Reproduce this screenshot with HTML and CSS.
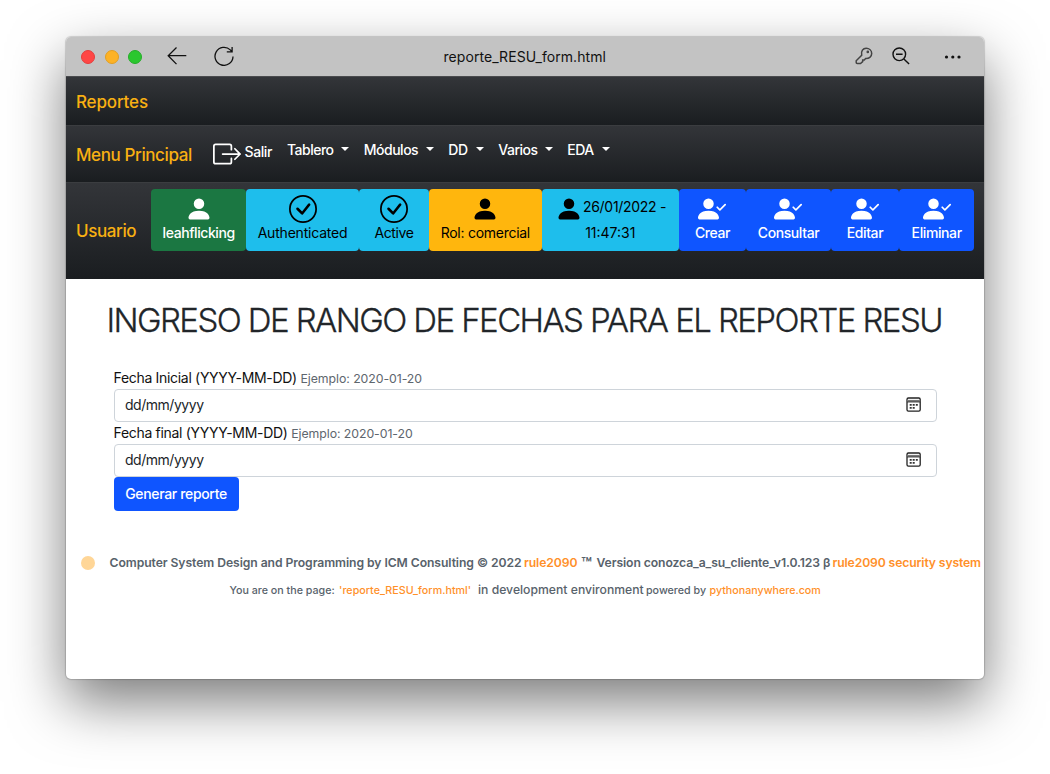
FILE: index.html
```html
<!DOCTYPE html>
<html lang="es">
<head>
<meta charset="utf-8">
<title>reporte_RESU_form.html</title>
<link rel="stylesheet" href="styles.css">
</head>
<body>
<svg class="defs" aria-hidden="true">
  <symbol id="person" viewBox="0 0 16 16"><path d="M3 14s-1 0-1-1 1-4 6-4 6 3 6 4-1 1-1 1H3zm5-6a3 3 0 1 0 0-6 3 3 0 0 0 0 6z"/></symbol>
  <symbol id="person-check" viewBox="0 0 16 16"><path d="M15.854 5.146a.5.5 0 0 1 0 .708l-3 3a.5.5 0 0 1-.708 0l-1.5-1.5a.5.5 0 0 1 .708-.708L12.5 7.793l2.646-2.647a.5.5 0 0 1 .708 0z"/><path d="M1 14s-1 0-1-1 1-4 6-4 6 3 6 4-1 1-1 1H1zm5-6a3 3 0 1 0 0-6 3 3 0 0 0 0 6z"/></symbol>
  <symbol id="check-circle" viewBox="0 0 16 16"><path d="M8 15A7 7 0 1 1 8 1a7 7 0 0 1 0 14zm0 1A8 8 0 1 0 8 0a8 8 0 0 0 0 16z"/><path d="M10.97 4.97a.235.235 0 0 0-.02.022L7.477 9.417 5.384 7.323a.75.75 0 0 0-1.06 1.06L6.97 11.03a.75.75 0 0 0 1.079-.02l3.992-4.99a.75.75 0 0 0-1.071-1.05z"/></symbol>
  <symbol id="exit" viewBox="0 0 16 16"><path d="M10 12.5a.5.5 0 0 1-.5.5h-8a.5.5 0 0 1-.5-.5v-9a.5.5 0 0 1 .5-.5h8a.5.5 0 0 1 .5.5v2a.5.5 0 0 0 1 0v-2A1.5 1.5 0 0 0 9.5 2h-8A1.5 1.5 0 0 0 0 3.5v9A1.5 1.5 0 0 0 1.5 14h8a1.5 1.5 0 0 0 1.5-1.5v-2a.5.5 0 0 0-1 0v2z"/><path d="M15.854 8.354a.5.5 0 0 0 0-.708l-3-3a.5.5 0 0 0-.708.708L14.293 7.5H5.5a.5.5 0 0 0 0 1h8.793l-2.147 2.146a.5.5 0 0 0 .708.708l3-3z"/></symbol>
  <symbol id="calendar" viewBox="0 0 16 16"><rect x="1" y="1" width="13.2" height="13.2" rx="1.4" fill="none" stroke="#222" stroke-width="1.3"/><path d="M1 2.900h13.200v2H1z" fill="#777"/><path d="M1 5h13.200" stroke="#222" stroke-width=".8"/><path d="M3.700 7.100h2v1.700h-2zM6.700 7.100h2v1.700h-2zM9.800 7.100h2v1.700h-2zM3.700 10h2v1.700h-2zM6.700 10h2v1.700h-2z" fill="#333"/></symbol>
</svg>

<div class="window">
  <header class="titlebar">
    <div class="lights"><i class="red"></i><i class="amber"></i><i class="green"></i></div>
    <svg class="back" viewBox="0 0 20 20"><path d="M19.300 9.700H1.200M9.500 1.500 1.200 9.700l8.300 8.400"/></svg>
    <svg class="reload" viewBox="0 0 20 20"><path d="M19 10.500A9 9 0 1 1 16.300 3.900L18 5.700M18.100.9v5h-5.300"/></svg>
    <span class="address">reporte_RESU_form.html</span>
    <svg class="key" viewBox="0 0 18 18"><path d="M6.700 8.200C5.800 4.200 8 1.200 11.200 1.200c3 0 5.500 2.200 5.500 5.300 0 3.400-2.800 5.200-6.100 5L9.300 13H7.700v1.600L5.500 16.600H2.200c-.7 0-1-.4-1-1V13.700z"/><circle cx="12.800" cy="4.900" r=".6"/></svg>
    <svg class="zoom" viewBox="0 0 18 18"><circle cx="7.300" cy="7.300" r="6.300"/><path d="M4 7.300h6.600M11.900 11.900l5.200 5.200"/></svg>
    <svg class="more" viewBox="0 0 18 6"><circle cx="2.500" cy="3" r="1.600"/><circle cx="8.800" cy="3" r="1.600"/><circle cx="15" cy="3" r="1.600"/></svg>
  </header>

  <nav class="bar bar-title"><a class="brand brand-reports">Reportes</a></nav>

  <nav class="bar bar-menu">
    <a class="brand brand-menu">Menu Principal</a>
    <a class="exit"><svg><use href="#exit"/></svg><span>Salir</span></a>
    <ul class="menu">
      <li class="m-tablero">Tablero</li>
      <li class="m-modulos">Módulos</li>
      <li class="m-dd">DD</li>
      <li class="m-varios">Varios</li>
      <li class="m-eda">EDA</li>
    </ul>
  </nav>

  <nav class="bar bar-user">
    <a class="brand brand-user">Usuario</a>
    <div class="tiles">
      <a class="tile user"><svg><use href="#person"/></svg><span>leahflicking</span></a>
      <a class="tile info auth"><svg><use href="#check-circle"/></svg><span>Authenticated</span></a>
      <a class="tile info active"><svg><use href="#check-circle"/></svg><span>Active</span></a>
      <a class="tile role"><svg><use href="#person"/></svg><span>Rol: comercial</span></a>
      <a class="tile info date"><b><svg><use href="#person"/></svg><span>26/01/2022 -</span></b><span class="time">11:47:31</span></a>
      <a class="tile act create"><svg><use href="#person-check"/></svg><span>Crear</span></a>
      <a class="tile act query"><svg><use href="#person-check"/></svg><span>Consultar</span></a>
      <a class="tile act edit"><svg><use href="#person-check"/></svg><span>Editar</span></a>
      <a class="tile act remove"><svg><use href="#person-check"/></svg><span>Eliminar</span></a>
    </div>
  </nav>

  <main>
    <h1>INGRESO DE RANGO DE FECHAS PARA EL REPORTE RESU</h1>
    <form>
      <label>Fecha Inicial (YYYY-MM-DD) <small>Ejemplo: 2020-01-20</small></label>
      <div class="field"><span>dd/mm/yyyy</span><svg><use href="#calendar"/></svg></div>
      <label>Fecha final (YYYY-MM-DD) <small>Ejemplo: 2020-01-20</small></label>
      <div class="field"><span>dd/mm/yyyy</span><svg><use href="#calendar"/></svg></div>
      <button type="button">Generar reporte</button>
    </form>
  </main>

  <footer>
    <div class="credits">
      <i class="dot"></i>
      <span class="company">Computer System Design and Programming by ICM Consulting © 2022</span>
      <a class="rule">rule2090</a>
      <span class="version"><span class="tm">™</span> Version conozca_a_su_cliente_v1.0.123 β</span>
      <a class="security">rule2090 security system</a>
    </div>
    <div class="page">
      <span class="here">You are on the page:</span>
      <a class="file">'reporte_RESU_form.html'</a>
      <span class="environment">in development environment</span>
      <span class="powered">powered by</span>
      <a>pythonanywhere.com</a>
    </div>
  </footer>
</div>
</body>
</html>
```
FILE: styles.css
```css
* { box-sizing: border-box; }
body { margin: 0; padding: 37px 0 0 66px; height: 774px; overflow: hidden; background: #fff; font: 14px/22px Inter, "Liberation Sans", sans-serif; color: #212529; white-space: nowrap; }
.defs { display: none; }
svg { display: block; flex: none; fill: currentColor; }
.window { width: 918px; height: 642px; border-radius: 5px; overflow: hidden; background: #fff; box-shadow: 0 0 1px 1px rgba(0,0,0,.16), 0 23px 56px rgba(0,0,0,.52); }

.titlebar { display: flex; align-items: center; height: 39px; padding-left: 15px; background: #c3c3c3; color: #111; }
.lights { display: flex; gap: 9.5px; }
.lights i { width: 14px; height: 14px; border-radius: 50%; }
.red { background: #ff4645; border: 1px solid #e33e3d; }
.amber { background: #fdb225; border: 1px solid #e29f22; }
.green { background: #2bc72f; border: 1px solid #25ad29; }
.titlebar svg { fill: none; stroke: #111; stroke-width: 1.3; }
.titlebar .back { width: 20px; height: 20px; margin: -1px 0 0 25px; }
.titlebar .reload { width: 20px; height: 20px; margin: -1px 0 0 27px; }
.address { width: 163px; margin: 1px 0 0 209.5px; letter-spacing: .06px; color: #111; }
.titlebar .key { width: 18px; height: 18px; margin: -1px 0 0 248px; stroke: #444; stroke-width: 1.5; }
.titlebar .zoom { width: 18px; height: 18px; margin: -1px 0 0 19px; stroke-width: 1.4; }
.titlebar .more { width: 18px; height: 6px; margin-left: 34px; fill: #111; stroke: none; }

.bar { display: flex; padding-left: 10px; background: linear-gradient(#333539, #1a1d20); border-top: 1px solid #3b3d40; color: #fff; }
.brand { flex: none; font-size: 17px; font-weight: 500; color: #f8b012; }
.bar-title { height: 49px; align-items: center; border-top-color: #4a4b4e; }
.brand-reports { letter-spacing: -.16px; margin-top: 1px; }
.bar-menu { height: 57px; align-items: center; }
.brand-menu { width: 137px; margin-top: 2px; letter-spacing: -.4px; }
.exit { display: flex; align-items: center; width: 74px; font-weight: 500; letter-spacing: -.4px; }
.exit svg { width: 28px; height: 28px; margin-right: 3.5px; }
.exit span { margin-top: -4px; }
.menu { display: flex; margin: -9px 0 0; padding: 0; list-style: none; font-weight: 500; letter-spacing: -.5px; }
.menu li { display: flex; align-items: center; justify-content: space-between; margin-right: 14.5px; }
.menu li::after { content: ""; border: 4px solid transparent; border-top-color: #fff; border-bottom: 0; margin-top: -2px; }
.m-tablero { width: 62.3px; }
.m-modulos { width: 70px; }
.m-dd { width: 35.5px; }
.m-varios { width: 54.5px; }
.m-eda { width: 43px; }

.bar-user { height: 97px; }
.brand-user { width: 75px; padding-top: 37px; letter-spacing: -.4px; }
.tiles { display: flex; height: 62px; margin-top: 6px; }
.tile { display: flex; flex-direction: column; align-items: center; padding-top: 6px; border-radius: 4px; color: #000; }
.tile svg { width: 28px; height: 28px; }
.tile span { margin-top: -1px; }
.user { width: 95.3px; background: #1b7742; color: #fff; font-weight: 500; letter-spacing: -.42px; }
.info { background: #1ebeec; }
.auth { width: 112.5px; letter-spacing: -.2px; }
.active { width: 70.3px; letter-spacing: -.4px; }
.role { width: 112.5px; background: #ffb60d; letter-spacing: -.27px; }
.date { width: 137.4px; letter-spacing: -.3px; }
.date b { display: flex; align-items: center; gap: .5px; font-weight: 400; }
.date b span { margin-top: -4px; }
.date .time { letter-spacing: 0; }
.act { background: #0f55ff; color: #fff; font-weight: 500; letter-spacing: -.4px; }
.create { width: 67px; }
.query { width: 85px; }
.edit { width: 68px; }
.remove { width: 75.3px; }

main { padding: 21px 48px 0; }
h1 { margin: -1px 0 0 -7.5px; font-size: 33px; line-height: 42px; font-weight: 300; letter-spacing: -1.58px; -webkit-text-stroke: .3px #212529; }
form { margin-top: 25.5px; }
label { display: block; height: 22px; margin-left: -.5px; letter-spacing: -.31px; color: #111; }
small { font-size: 12.3px; letter-spacing: -.06px; color: #5e666e; }
.field { display: flex; align-items: center; justify-content: space-between; width: 823px; height: 33.3px; padding: 0 14px 1px 10px; border: 1px solid #ced4da; border-radius: 4px; letter-spacing: -.47px; }
.field svg { width: 16px; height: 16px; margin-top: 1px; }
button { display: block; width: 125px; height: 34px; padding: 0 1px 1px 0; border: 0; border-radius: 4px; background: #0f55ff; color: #fff; font: 500 14px/22px Inter, "Liberation Sans", sans-serif; letter-spacing: -.34px; }

footer { color: #58626b; font-weight: 500; }
footer a { color: #ff9029; }
.credits { display: flex; align-items: center; margin-top: 40.5px; padding-left: 15px; font-size: 12.2px; font-weight: 600; }
.dot { width: 14px; height: 14px; margin: 0 14.5px 0 0; border-radius: 50%; background: #ffd697; }
.company { width: 414.5px; letter-spacing: -.08px; }
.rule { width: 57px; letter-spacing: -.1px; }
.version { width: 251.5px; letter-spacing: -.1px; }
.tm { display: inline-block; width: 12.5px; font-size: 17.5px; line-height: 12px; vertical-align: -3px; }
.security { letter-spacing: -.13px; }
.page { display: flex; align-items: baseline; margin-top: 5px; padding-left: 163.5px; font-size: 10.7px; }
.here { width: 109.5px; }
.file { width: 139px; letter-spacing: .03px; }
.environment { width: 168px; font-size: 12.2px; }
.powered { width: 63.5px; }
```
